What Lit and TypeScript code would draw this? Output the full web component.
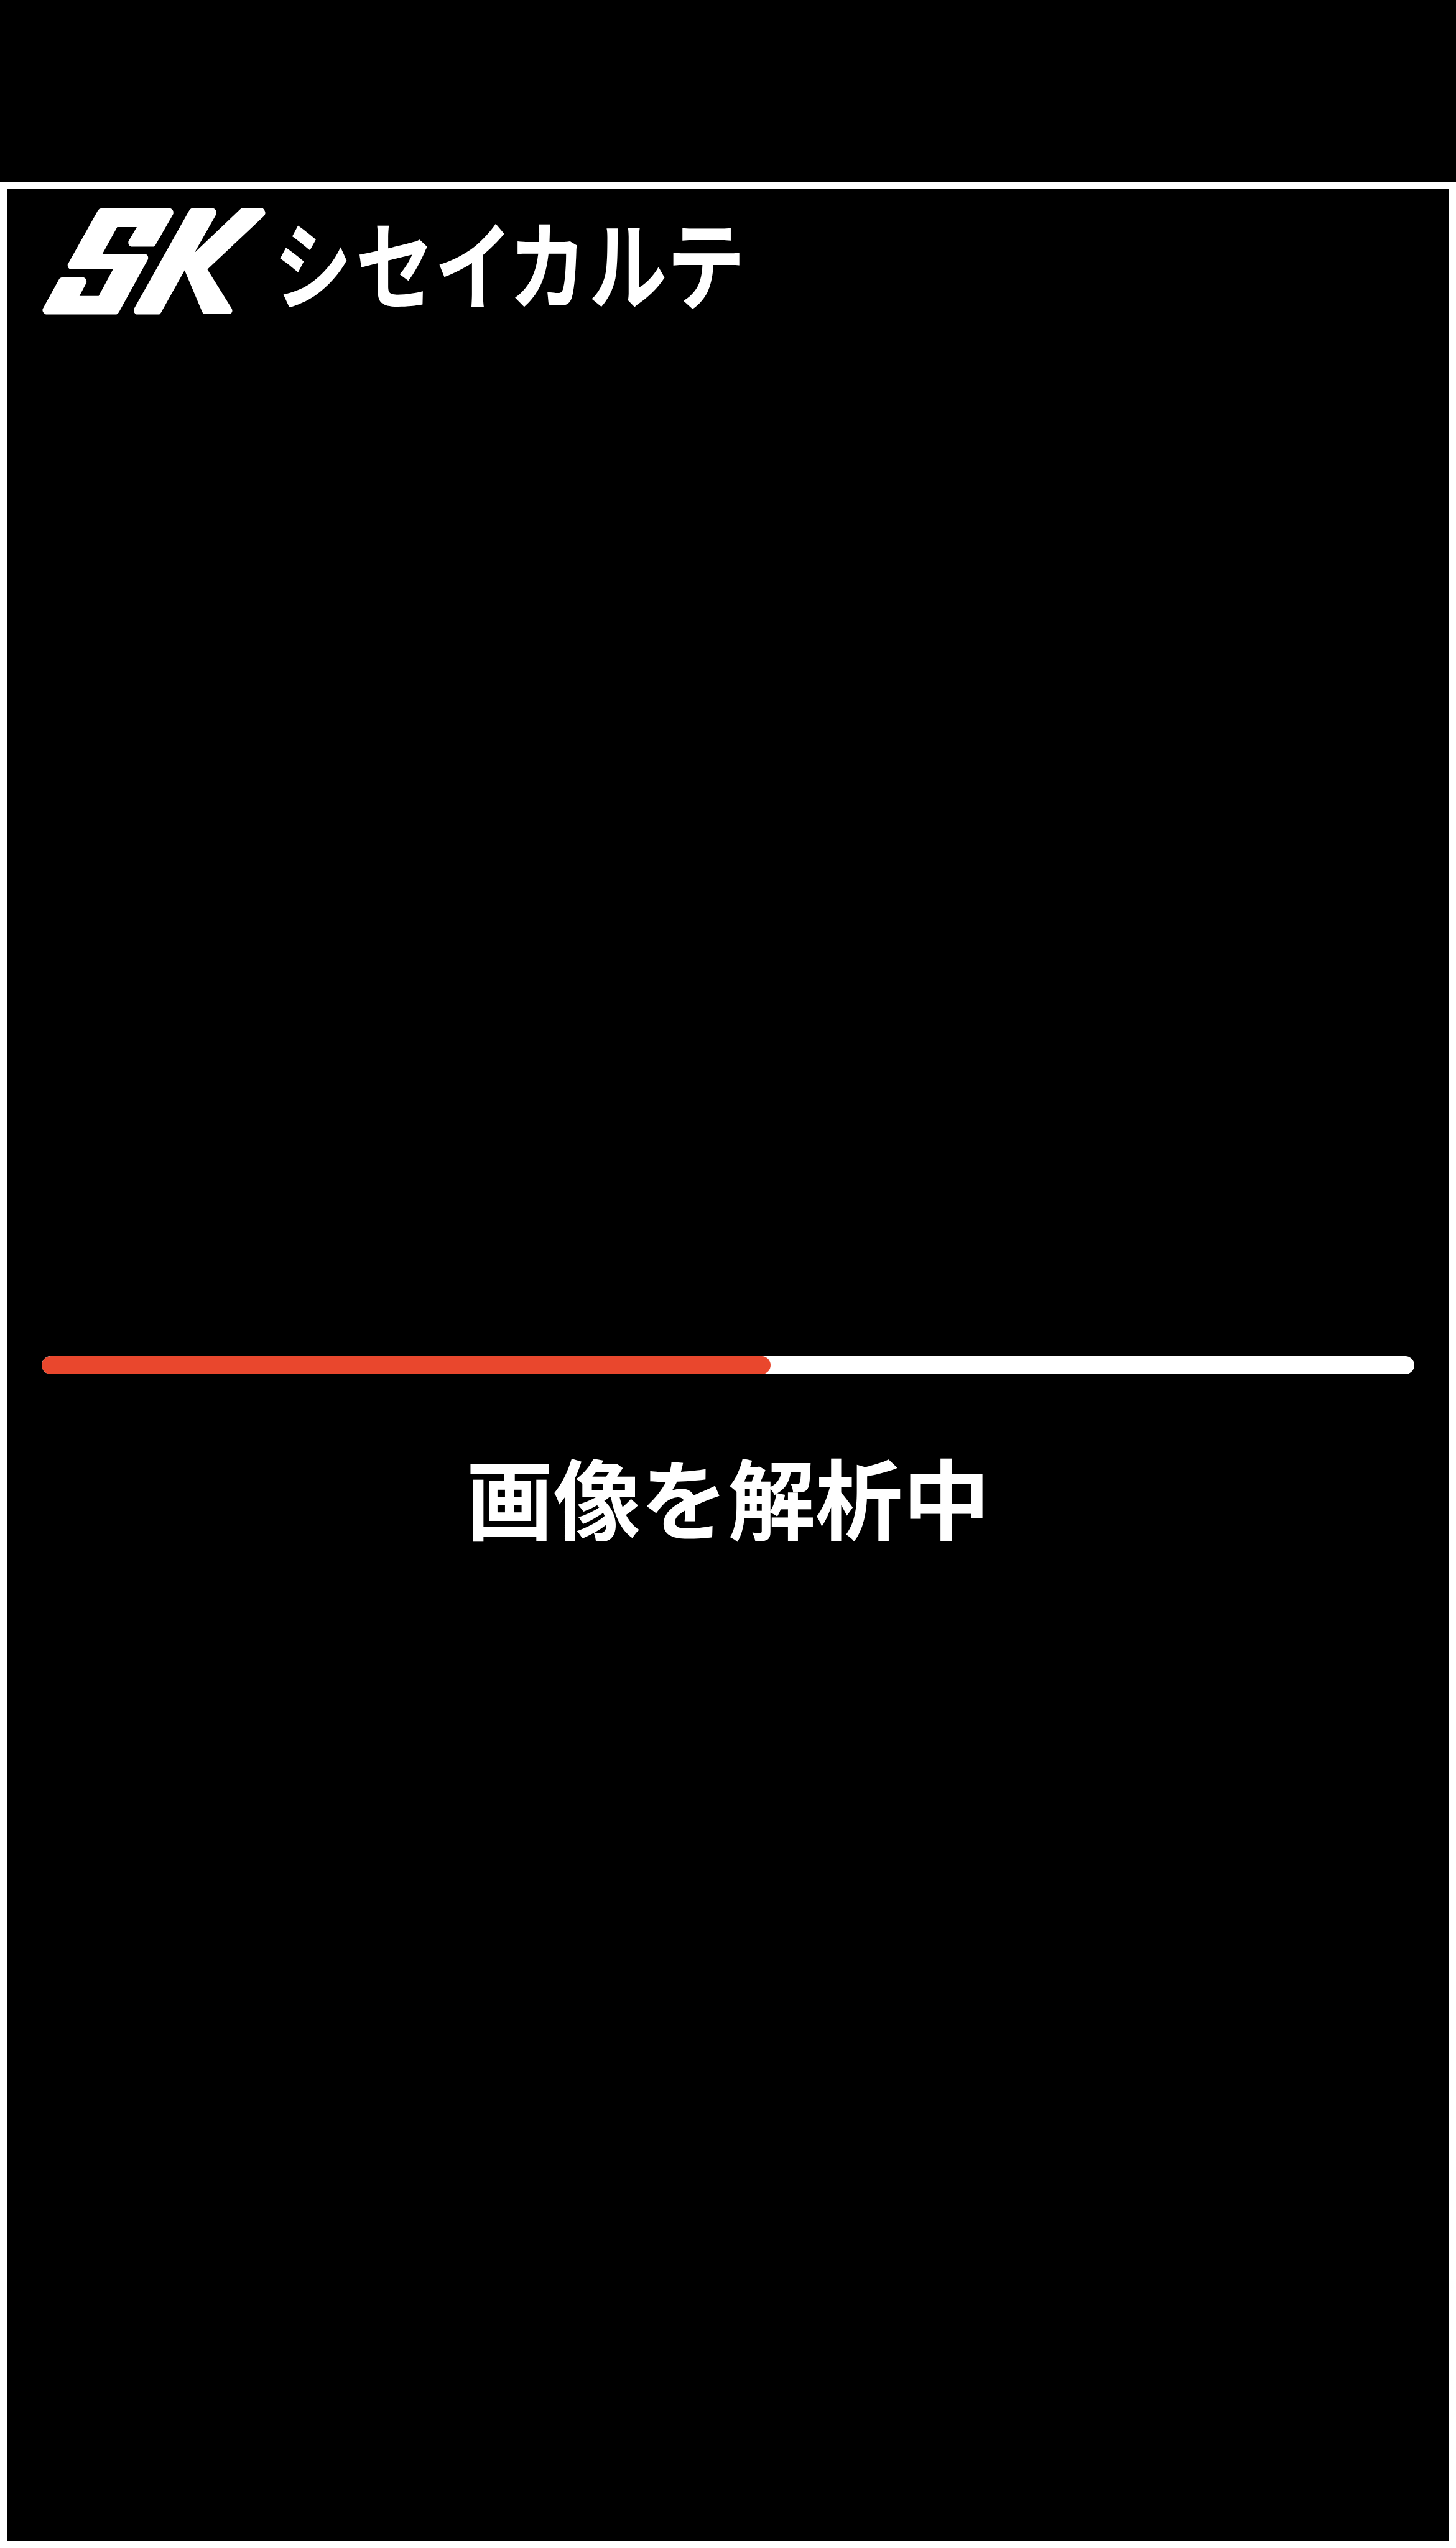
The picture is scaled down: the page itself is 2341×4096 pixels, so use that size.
import { LitElement, html, css, svg } from "lit";
import { customElement, property } from "lit/decorators.js";

@customElement("brand-logo")
export class BrandLogo extends LitElement {
  static styles = css`
    :host {
      display: block;
      line-height: 0;
    }
    .logo {
      display: block;
      width: 100%;
      height: auto;
      overflow: visible;
      fill: #fff;
    }
    .name {
      font-family: "Noto Sans CJK JP", sans-serif;
      font-weight: 700;
      font-size: 256px;
    }
  `;

  private mark() {
    return svg`
      <g transform="translate(0 480) scale(0.48469 0.33333)">
        <path d="M573 274H962Q977 278 982 300V320L882 574Q877 586 870 591H743Q728 582 727 562V548L775 429H664L580 650H820Q836 654 839 675V693L674 1130Q668 1143 660 1149H260Q244 1140 241 1120V1106L336 855Q341 846 348 844H474Q487 850 490 872V887L450 996H559L640 778H399Q385 768 383 749V738L555 290Q562 277 573 274Z"/>
        <path d="M1086 274H1208Q1222 280 1226 304V321L1102 640L1367 274H1489Q1500 285 1503 304V320Q1500 332 1494 341L1175 777L1313 1100Q1317 1110 1316 1124Q1314 1138 1304 1147H1159Q1149 1142 1146 1130L1046 785L913 1133Q909 1144 903 1149H773Q760 1140 758 1122V1106L1070 297Q1076 278 1086 274Z"/>
      </g>`;
  }

  render() {
    return html`
      <svg class="logo" viewBox="116 570 1920 294" role="img" aria-label="SK シセイカルテ">
        ${this.mark()}
        <g transform="translate(752 829) scale(0.84 1.04)">
          <text class="name" x="0 268 526 768 1030 1285" y="0">シセイカルテ</text>
        </g>
      </svg>
    `;
  }
}

@customElement("progress-bar")
export class ProgressBar extends LitElement {
  @property({ type: Number }) value = 0;

  static styles = css`
    :host {
      display: block;
    }
    .track {
      height: 29.25px;
      border-radius: 15px;
      background: #fff;
      overflow: hidden;
    }
    .fill {
      height: 100%;
      border-radius: 15px;
      background: #e9472d;
    }
  `;

  render() {
    return html`
      <div class="track" role="progressbar" aria-valuenow=${this.value}>
        <div class="fill" style="width:${this.value}%"></div>
      </div>
    `;
  }
}

@customElement("app-root")
export class AppRoot extends LitElement {
  static styles = css`
    :host {
      display: block;
    }
    .page {
      display: flex;
      flex-direction: column;
      box-sizing: border-box;
      height: 4096px;
      padding-top: 292.6px;
      background: #000;
    }
    .frame {
      flex: 1;
      display: flex;
      box-sizing: border-box;
      padding: 11.7px;
      background: #fff;
    }
    .screen {
      flex: 1;
      display: flex;
      flex-direction: column;
      padding: 29.3px 55px 0;
      background: #000;
    }
    .brand {
      width: 1123.7px;
      margin-left: 1.2px;
    }
    .status {
      display: flex;
      flex-direction: column;
      margin-top: 1674.3px;
    }
    .label {
      margin: 95px 0 0;
      text-align: center;
      color: #fff;
      font-family: "Noto Sans CJK JP", sans-serif;
      font-weight: 700;
      font-size: 140.4px;
      line-height: 200px;
    }
  `;

  render() {
    return html`
      <main class="page">
        <section class="frame">
          <div class="screen">
            <brand-logo class="brand"></brand-logo>
            <div class="status">
              <progress-bar .value=${53.1}></progress-bar>
              <p class="label">画像を解析中</p>
            </div>
          </div>
        </section>
      </main>
    `;
  }
}
